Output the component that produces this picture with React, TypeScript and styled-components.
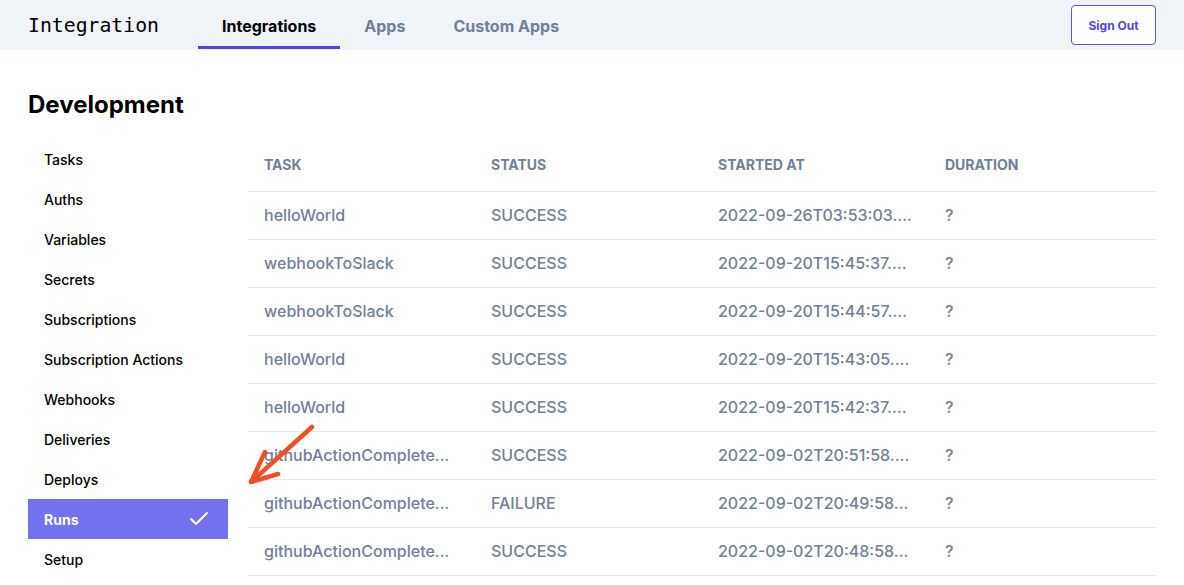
import React from "react";
import styled, { createGlobalStyle } from "styled-components";
import { Check } from "lucide-react";

const GlobalStyle = createGlobalStyle`
  * { box-sizing: border-box; }
  body {
    margin: 0;
    background: #fff;
    font-family: Inter, "Noto Sans", sans-serif;
    color: #000;
  }
`;

const menu = [
  "Tasks",
  "Auths",
  "Variables",
  "Secrets",
  "Subscriptions",
  "Subscription Actions",
  "Webhooks",
  "Deliveries",
  "Deploys",
  "Runs",
  "Setup",
];

// values as they show in the truncated table cells
const runs = [
  ["helloWorld", "SUCCESS", "2022-09-26T03:53:03.…"],
  ["webhookToSlack", "SUCCESS", "2022-09-20T15:45:37.…"],
  ["webhookToSlack", "SUCCESS", "2022-09-20T15:44:57.…"],
  ["helloWorld", "SUCCESS", "2022-09-20T15:43:05.…"],
  ["helloWorld", "SUCCESS", "2022-09-20T15:42:37.…"],
  ["githubActionComplete…", "SUCCESS", "2022-09-02T20:51:58.…"],
  ["githubActionComplete…", "FAILURE", "2022-09-02T20:49:58.…"],
  ["githubActionComplete…", "SUCCESS", "2022-09-02T20:48:58.…"],
];

export default function App() {
  return (
    <>
      <GlobalStyle />
      <Header>
        <Logo>Integration</Logo>
        <Tabs>
          <Tab active>Integrations</Tab>
          <Tab>Apps</Tab>
          <Tab>Custom Apps</Tab>
        </Tabs>
        <SignOut>Sign Out</SignOut>
      </Header>
      <Main>
        <Title>Development</Title>
        <Body>
          <Side>
            {menu.map((m) => (
              <SideItem key={m} active={m === "Runs"}>
                {m}
                {m === "Runs" && <Check size={24} strokeWidth={2} />}
              </SideItem>
            ))}
          </Side>
          <Table>
            <thead>
              <tr>
                <Th>Task</Th>
                <Th>Status</Th>
                <Th>Started At</Th>
                <Th>Duration</Th>
              </tr>
            </thead>
            <tbody>
              {runs.map((r, i) => (
                <tr key={i}>
                  <Td>{r[0]}</Td>
                  <Td>{r[1]}</Td>
                  <Td>{r[2]}</Td>
                  <Td>?</Td>
                </tr>
              ))}
            </tbody>
          </Table>
        </Body>
        <Arrow width="80" height="70" viewBox="0 0 80 70">
          <path
            d="M69 3 L8 58 M8 58 L22 28 M8 58 L35 50"
            stroke="#f04e23"
            strokeWidth="4.5"
            strokeLinecap="round"
            strokeLinejoin="round"
            fill="none"
          />
        </Arrow>
      </Main>
    </>
  );
}

const Header = styled.header`
  display: flex;
  align-items: stretch;
  height: 50px;
  background: #f0f4f8;
  padding: 0 28px;
`;

const Logo = styled.div`
  font-family: "DejaVu Sans Mono", "Liberation Mono", monospace;
  font-size: 19.8px;
  display: flex;
  align-items: center;
  padding-top: 1px;
  width: 170px;
`;

const Tabs = styled.nav`
  display: flex;
  flex: 1;
`;

const Tab = styled.a<{ active?: boolean }>`
  display: flex;
  align-items: center;
  padding: 6px 24px 0;
  font-size: 16px;
  font-weight: 700;
  color: ${(p) => (p.active ? "#000" : "#718096")};
  border-bottom: 3px solid ${(p) => (p.active ? "#4f46e5" : "transparent")};
  margin-bottom: 1px;
  cursor: pointer;
`;

const SignOut = styled.button`
  align-self: center;
  width: 85px;
  height: 40px;
  background: #fff;
  border: 1px solid #5b53ec;
  border-radius: 4px;
  color: #4f46e5;
  font-family: Inter, sans-serif;
  font-size: 12px;
  font-weight: 700;
  cursor: pointer;
`;

const Main = styled.main`
  position: relative;
  padding: 39px 28px 0;
`;

const Title = styled.h1`
  margin: 0 0 18px;
  font-size: 24px;
  line-height: 32px;
  font-weight: 700;
`;

const Body = styled.div`
  display: flex;
  gap: 20px;
`;

const Side = styled.ul`
  list-style: none;
  margin: 0;
  padding: 0;
  width: 200px;
  flex-shrink: 0;
`;

const SideItem = styled.li<{ active?: boolean }>`
  display: flex;
  align-items: center;
  justify-content: space-between;
  height: 40px;
  padding: 0 16px;
  font-size: 14px;
  font-weight: ${(p) => (p.active ? 700 : 500)};
  background: ${(p) => (p.active ? "#7471ef" : "transparent")};
  color: ${(p) => (p.active ? "#fff" : "#000")};
  svg {
    margin-right: 1px;
  }
`;

const Table = styled.table`
  flex: 1;
  width: 100%;
  border-collapse: collapse;
  table-layout: fixed;
  align-self: flex-start;
`;

const Th = styled.th`
  width: 25%;
  height: 52px;
  padding: 0 16px;
  text-align: left;
  text-transform: uppercase;
  font-size: 14px;
  font-weight: 700;
  color: #718096;
  border-bottom: 1px solid #e2e8f0;
`;

const Td = styled.td`
  height: 48px;
  padding: 0 16px;
  font-size: 16px;
  font-weight: 500;
  color: #718096;
  white-space: nowrap;
  overflow: hidden;
  text-overflow: ellipsis;
  border-bottom: 1px solid #e2e8f0;
`;

const Arrow = styled.svg`
  position: absolute;
  left: 243px;
  top: 374px;
  pointer-events: none;
`;
